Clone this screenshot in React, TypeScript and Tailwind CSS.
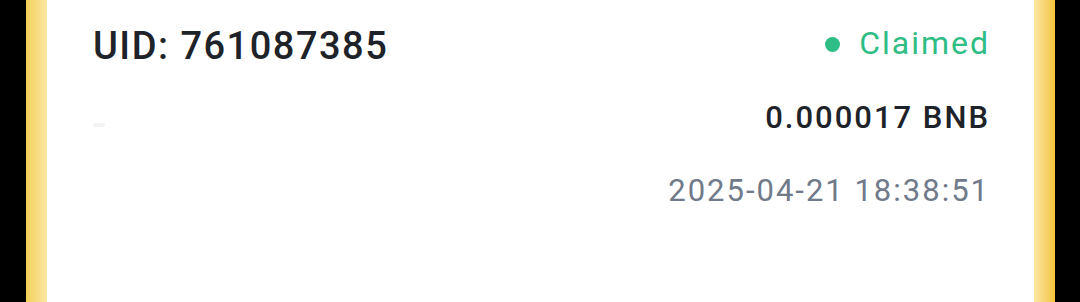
import React from "react";

const App = () => {
  return (
    <div className="flex h-[302px] w-[1080px] bg-black" style={{ fontFamily: "Roboto, 'Noto Sans', sans-serif" }}>
      <div className="w-[26px] bg-black" />
      <div className="w-[21px] bg-gradient-to-r from-[#f3cf55] to-[#fbe7a2]" />
      <div className="flex-1 bg-white px-[46px] pt-[27px]">
        <div className="flex items-start justify-between">
          <div className="text-[38px] leading-[38px] font-medium tracking-[1.5px] text-[#1e2329]">UID: 761087385</div>
          <div className="flex items-center gap-[19px] text-[32px] leading-[32px] tracking-[2px] text-[#2ebd85]">
            <span className="mt-[3px] h-[15px] w-[15px] rounded-full bg-[#2ebd85]" />
            <span className="-mr-[2px]">Claimed</span>
          </div>
        </div>
        <div className="mt-[37px] flex items-center justify-between">
          <span className="mt-[14px] h-[4px] w-[12px] rounded-full bg-[#f3f3f3]" />
          <div className="-mr-[2px] text-[31px] leading-[31px] font-medium tracking-[2px] text-[#1e2329]">0.000017 BNB</div>
        </div>
        <div className="mt-[42px] flex justify-end">
          <div className="-mr-[2px] text-[31px] leading-[31px] tracking-[2px] text-[#707a8a]">2025-04-21 18:38:51</div>
        </div>
      </div>
      <div className="w-[21px] bg-gradient-to-r from-[#fbe7a2] to-[#f3c233]" />
      <div className="w-[25px] bg-black" />
    </div>
  );
};

export default App;
